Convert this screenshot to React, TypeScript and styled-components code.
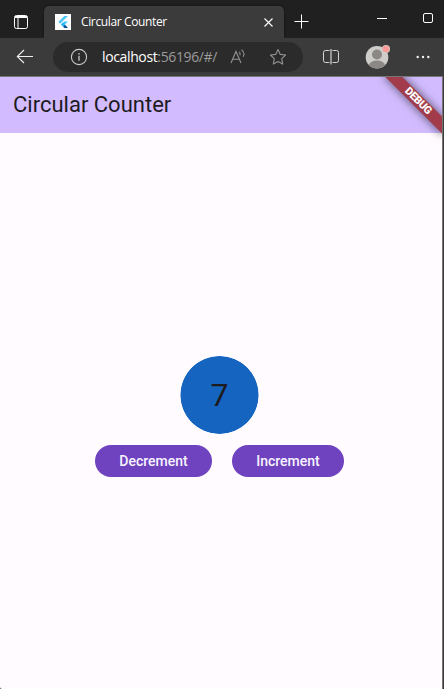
import React from "react";
import styled, { createGlobalStyle } from "styled-components";

const GlobalStyle = createGlobalStyle`
  *, *::before, *::after { box-sizing: border-box; }
  html, body { margin: 0; background: #3b3b3b; overflow: hidden; }
  button { font: inherit; border: 0; margin: 0; padding: 0; background: none; color: inherit; }
  svg { display: block; flex: none; }
`;

const Window = styled.div`
  display: flex;
  flex-direction: column;
  width: 444px;
  height: 689px;
  overflow: hidden;
  background: #3b3b3b;
`;

const TabStrip = styled.div`
  display: flex;
  height: 38px;
  background: #202020;
  color: #fff;
`;

const StripButton = styled.button<{ $width: number; $top?: number; $left?: number }>`
  width: ${(p) => p.$width}px;
  height: 38px;
  padding: ${(p) => p.$top ?? 0}px 0 0 ${(p) => p.$left ?? 0}px;
  display: flex;
  align-items: flex-start;
  flex: none;
`;

const Tab = styled.div`
  display: flex;
  align-items: center;
  width: 240px;
  height: 32px;
  margin-top: 6px;
  padding: 0 11px;
  border-radius: 5px 5px 0 0;
  background: #3b3b3b;
  box-shadow: 0 0 3px rgba(0, 0, 0, 0.5);
  clip-path: inset(-4px -4px 0 -4px);
`;

const Favicon = styled.span`
  width: 16px;
  height: 16px;
  background: #fff;
`;

const TabTitle = styled.span`
  flex: 1;
  margin-left: 10px;
  font: 12px/16px "Open Sans", sans-serif;
  letter-spacing: -0.37px;
  white-space: nowrap;
`;

const Toolbar = styled.div`
  display: flex;
  align-items: center;
  height: 38px;
  padding-left: 16px;
  background: #3b3b3b;
`;

const AddressBar = styled.div`
  display: flex;
  align-items: center;
  width: 250px;
  height: 30px;
  margin-left: 19px;
  padding-left: 17px;
  border-radius: 15px;
  background: #2b2b2b;
`;

const Url = styled.span`
  width: 128px;
  margin-left: 14px;
  font: 14px/20px "Open Sans", sans-serif;
  letter-spacing: -0.37px;
  color: #9b9b9b;
  white-space: nowrap;
`;

const Host = styled.span`
  color: #fff;
`;

const Page = styled.main`
  position: relative;
  display: flex;
  flex-direction: column;
  width: 443px;
  height: 613px;
  border-top: 1px solid #767676;
  border-right: 1px solid #767676;
  border-bottom-left-radius: 2px;
  background: #fffbff;
  font-family: Roboto, sans-serif;
  overflow: hidden;
`;

const AppBar = styled.header`
  display: flex;
  align-items: center;
  flex: none;
  height: 56px;
  padding-left: 13px;
  background: #d2bcff;
  color: #1d1b1e;
  font-size: 22px;
  line-height: 28px;
`;

const Body = styled.section`
  display: flex;
  flex: 1;
  flex-direction: column;
  align-items: center;
  padding: 223px 3px 0 0;
`;

const Count = styled.div`
  display: flex;
  align-items: center;
  justify-content: center;
  width: 79px;
  height: 78px;
  border-radius: 50%;
  background: radial-gradient(circle at 39.5px 39px, #1565c0 38.6px, transparent 39.4px);
  color: #1d1b1e;
  font-size: 32px;
  line-height: 40px;
`;

const Actions = styled.div`
  display: flex;
  gap: 20px;
  margin-top: 11px;
`;

const PillButton = styled.button<{ $width: number }>`
  width: ${(p) => p.$width}px;
  height: 32px;
  border-radius: 16px;
  background: #6f43c0;
  color: #f8f3ff;
  font-size: 14px;
  font-weight: 500;
  line-height: 32px;
  text-align: center;
`;

const DebugBanner = styled.div`
  position: absolute;
  top: 28px;
  right: -40px;
  width: 80px;
  height: 12px;
  transform: rotate(45deg);
  transform-origin: 40px -28px;
  background: #a23c4b;
  box-shadow: 0 0 8px 1px rgba(0, 0, 0, 0.5);
  color: #fff;
  font-size: 10.8px;
  font-weight: 900;
  letter-spacing: -0.35px;
  line-height: 12px;
  text-align: center;
`;

const Gap = styled.span<{ $size: number }>`
  flex: 0 0 ${(p) => p.$size}px;
`;

const WorkspaceIcon = () => (
  <svg width="14" height="14" viewBox="0 0 14 14" fill="none" stroke="#fff">
    <rect x=".5" y=".5" width="13" height="13" rx="2" />
    <path d="M1 1.5h12" />
    <path d="M1 2.5h12" />
    <path d="M4 3v10" />
  </svg>
);

const FlutterIcon = () => (
  <svg width="16" height="16" viewBox="0 0 16 16">
    <path d="M9.2 2h3.8L5.2 9.8 3.3 7.9z" fill="#54c5f8" />
    <path d="M9.2 7.4H13L9.8 10.6 8 12.4 6 10.5z" fill="#40c4ff" />
    <path d="M8 12.4l1.9-1.9L13 14H9.4z" fill="#01579b" />
    <path d="M6 10.5l1.9-1.9 2 1.9L8 12.4z" fill="#29b6f6" />
  </svg>
);

const CloseIcon = () => (
  <svg width="9" height="9" viewBox="0 0 9 9" stroke="#fff" strokeWidth="1.1">
    <path d="M.5.5l8 8M8.5.5l-8 8" />
  </svg>
);

const PlusIcon = () => (
  <svg width="15" height="15" viewBox="0 0 15 15" stroke="#fff">
    <path d="M7.5.5v14M.5 7.5h14" />
  </svg>
);

const MinimizeIcon = () => (
  <svg width="10" height="1" viewBox="0 0 10 1">
    <path d="M0 .5h10" stroke="#fff" />
  </svg>
);

const MaximizeIcon = () => (
  <svg width="10" height="10" viewBox="0 0 10 10">
    <rect x=".5" y=".5" width="9" height="9" rx="1.5" fill="none" stroke="#fff" />
  </svg>
);

const BackIcon = () => (
  <svg width="18" height="16" viewBox="0 0 18 16" fill="none" stroke="#eee" strokeWidth="1.1">
    <path d="M8 1L1.3 7.5 8 14M1.3 7.5H17" />
  </svg>
);

const InfoIcon = () => (
  <svg width="18" height="18" viewBox="0 0 18 18" fill="none" stroke="#c8c8c8">
    <circle cx="9" cy="9" r="7.6" strokeWidth="1.1" />
    <path d="M9 7.8v5M9 5v1.5" strokeWidth="1.3" />
  </svg>
);

const ReadAloudIcon = () => (
  <svg width="16" height="16" viewBox="0 0 16 16" fill="none" stroke="#929292" strokeWidth="1.1">
    <path d="M1 14L6 2.5l5 11.5M2.7 10.3h6.6M9.2 2.8c1 1 1.2 2.2.6 3.5M11.5.8c2.6 2 3 4.6 1.7 7" />
  </svg>
);

const StarIcon = () => (
  <svg width="18" height="18" viewBox="0 0 18 18" fill="none" stroke="#929292" strokeWidth="1.1" strokeLinejoin="round">
    <path d="M9 1.5l2.3 4.9 5.3.6-3.9 3.7 1 5.4L9 13.5l-4.7 2.6 1-5.4L1.4 7l5.3-.6z" />
  </svg>
);

const SplitIcon = () => (
  <svg width="16" height="16" viewBox="0 0 16 16" fill="none" stroke="#d8d8d8">
    <path d="M5.5 1.5h-3a2 2 0 0 0-2 2v8a2 2 0 0 0 2 2h3M10.5 1.5h3a2 2 0 0 1 2 2v8a2 2 0 0 1-2 2h-3" />
    <path d="M5 1.5h2M5 13.5h2M9 1.5h2M9 13.5h2" opacity=".6" />
    <path d="M8 0v15.5" stroke="#a0a0a0" strokeWidth="1.8" />
  </svg>
);

const ProfileIcon = () => (
  <svg width="26" height="26" viewBox="0 0 26 26">
    <clipPath id="avatar"><circle cx="12" cy="13.2" r="11.3" /></clipPath>
    <circle cx="12" cy="13.2" r="11.3" fill="#cfcdca" />
    <g clipPath="url(#avatar)" fill="#8b8885">
      <circle cx="12" cy="10.5" r="5" />
      <ellipse cx="12" cy="21.2" rx="8" ry="4.6" />
    </g>
    <circle cx="21" cy="5" r="4" fill="#cfcdca" />
    <circle cx="21" cy="5" r="3.3" fill="#ff9a96" />
  </svg>
);

const MoreIcon = () => (
  <svg width="14" height="4" viewBox="0 0 14 4" fill="#f2f2f2">
    <circle cx="1.7" cy="2" r="1.2" />
    <circle cx="7" cy="2" r="1.2" />
    <circle cx="12.3" cy="2" r="1.2" />
  </svg>
);

export default function App() {
  const [count, setCount] = React.useState(7);
  return (
    <>
      <GlobalStyle />
      <Window>
        <TabStrip>
          <StripButton $width={44} $top={15} $left={14} aria-label="Workspaces"><WorkspaceIcon /></StripButton>
          <Tab>
            <Favicon><FlutterIcon /></Favicon>
            <TabTitle>Circular Counter</TabTitle>
            <CloseIcon />
          </Tab>
          <StripButton $width={93} $top={14} $left={10} aria-label="New tab"><PlusIcon /></StripButton>
          <StripButton $width={46} $top={18} aria-label="Minimize"><MinimizeIcon /></StripButton>
          <StripButton $width={21} $top={13} aria-label="Maximize"><MaximizeIcon /></StripButton>
        </TabStrip>
        <Toolbar>
          <BackIcon />
          <AddressBar>
            <InfoIcon />
            <Url><Host>localhost</Host>:56196/#/</Url>
            <ReadAloudIcon />
            <Gap $size={23} />
            <StarIcon />
          </AddressBar>
          <Gap $size={20} />
          <SplitIcon />
          <Gap $size={26} />
          <ProfileIcon />
          <Gap $size={25} />
          <MoreIcon />
        </Toolbar>
        <Page>
          <AppBar>Circular Counter</AppBar>
          <Body>
            <Count>{count}</Count>
            <Actions>
              <PillButton $width={117} onClick={() => setCount(count - 1)}>Decrement</PillButton>
              <PillButton $width={112} onClick={() => setCount(count + 1)}>Increment</PillButton>
            </Actions>
          </Body>
          <DebugBanner>DEBUG</DebugBanner>
        </Page>
      </Window>
    </>
  );
}
